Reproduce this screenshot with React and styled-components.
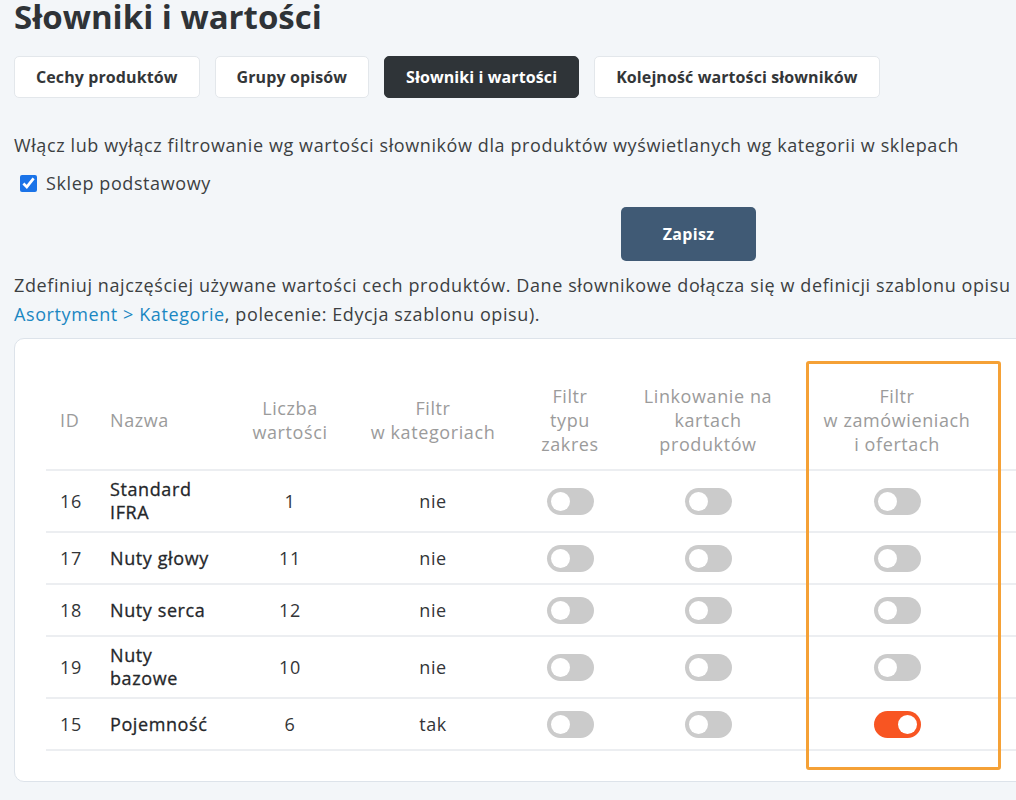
import React from "react";
import styled, { createGlobalStyle } from "styled-components";

const Global = createGlobalStyle`
  html, body {
    margin: 0;
    padding: 0;
    background: #f3f6f9;
    overflow: hidden;
  }
  body {
    font-family: "Open Sans", "Noto Sans", sans-serif;
    color: #3a3d40;
  }
`;

const Page = styled.div`
  width: 1363px;
  padding: 0 0 0 14px;
  box-sizing: border-box;
`;

const Title = styled.h1`
  margin: 0;
  font-size: 33px;
  line-height: 34px;
  font-weight: 700;
  color: #2f3337;
`;

const Tabs = styled.nav`
  display: flex;
  gap: 15px;
  margin-top: 22px;
`;

const Tab = styled.button`
  height: 42px;
  padding: 0 21px;
  border-radius: 5px;
  border: 1px solid ${(p) => (p.$active ? "#2f3438" : "#e3e7eb")};
  background: ${(p) => (p.$active ? "#2f3438" : "#ffffff")};
  color: ${(p) => (p.$active ? "#ffffff" : "#333638")};
  font-family: inherit;
  font-size: 16px;
  letter-spacing: 0.1px;
  font-weight: 700;
  cursor: pointer;
`;

const Text = styled.p`
  margin: ${(p) => p.$margin || "0"};
  font-size: 18px;
  letter-spacing: 0.6px;
  line-height: ${(p) => p.$lh || "28px"};
  color: #3c3f42;
  white-space: nowrap;
`;

const Link = styled.a`
  color: #1b87c2;
  text-decoration: none;
`;

const CheckRow = styled.label`
  display: flex;
  align-items: center;
  gap: 9px;
  margin: 10px 0 0 6px;
  font-size: 18px;
  letter-spacing: 0.6px;
  line-height: 28px;
  color: #3c3f42;
`;

const Check = styled.input`
  width: 17px;
  height: 17px;
  margin: 0;
  accent-color: #1a73e8;
`;

const Actions = styled.div`
  display: flex;
  justify-content: center;
  margin-top: 10px;
`;

const SaveButton = styled.button`
  width: 135px;
  height: 54px;
  border: none;
  border-radius: 5px;
  background: #405a75;
  color: #ffffff;
  font-family: inherit;
  font-size: 16px;
  letter-spacing: 0.3px;
  font-weight: 700;
`;

const Card = styled.section`
  margin-top: 9px;
  background: #ffffff;
  border: 1px solid #dde3ea;
  border-radius: 10px;
  padding: 32px 31px 30px;
`;

const TableWrap = styled.div`
  position: relative;
`;

const Highlight = styled.div`
  position: absolute;
  left: 760px;
  top: -10px;
  width: 195px;
  height: 409px;
  box-sizing: border-box;
  border: 3px solid #f5a136;
  border-radius: 3px;
  pointer-events: none;
`;

const Table = styled.table`
  width: 100%;
  table-layout: fixed;
  border-collapse: collapse;
`;

const Th = styled.th`
  padding: 13px 4px;
  padding-left: ${(p) => p.$pl || "4px"};
  font-size: 18px;
  letter-spacing: 0.6px;
  line-height: 24px;
  font-weight: 400;
  color: #9b9b9b;
  text-align: ${(p) => p.$align || "center"};
  vertical-align: middle;
  white-space: pre-line;
  border-bottom: 2px solid #eceef1;
`;

const Td = styled.td`
  height: 36px;
  padding: 7px 4px;
  padding-left: ${(p) => p.$pl || "4px"};
  font-size: 18px;
  letter-spacing: 0.6px;
  line-height: 23px;
  color: ${(p) => (p.$strong ? "#25272a" : "#333538")};
  -webkit-text-stroke: ${(p) => (p.$strong ? "0.3px #25272a" : "0")};
  text-align: ${(p) => p.$align || "center"};
  font-weight: 400;
  white-space: pre-line;
  vertical-align: middle;
  border-bottom: 2px solid #eceef1;
`;

const SwitchBox = styled.div`
  display: flex;
  align-items: center;
  justify-content: center;
  height: 36px;
`;

const Track = styled.span`
  position: relative;
  display: block;
  width: 47px;
  height: 27px;
  border-radius: 14px;
  background: ${(p) => (p.$on ? "#f85522" : "#cbcbcb")};
`;

const Knob = styled.span`
  position: absolute;
  top: 4px;
  left: ${(p) => (p.$on ? "24px" : "4px")};
  width: 19px;
  height: 19px;
  border-radius: 50%;
  background: #ffffff;
`;

const Toggle = ({ on }) => (
  <SwitchBox>
    <Track $on={on}>
      <Knob $on={on} />
    </Track>
  </SwitchBox>
);

const rows = [
  { id: 16, name: "Standard\nIFRA", count: 1, cat: "nie", zamow: false },
  { id: 17, name: "Nuty głowy", count: 11, cat: "nie", zamow: false },
  { id: 18, name: "Nuty serca", count: 12, cat: "nie", zamow: false },
  { id: 19, name: "Nuty\nbazowe", count: 10, cat: "nie", zamow: false },
  { id: 15, name: "Pojemność", count: 6, cat: "tak", zamow: true },
];

const tabs = [
  "Cechy produktów",
  "Grupy opisów",
  "Słowniki i wartości",
  "Kolejność wartości słowników",
];

export default function App() {
  return (
    <>
      <Global />
      <Page>
        <Title>Słowniki i wartości</Title>
        <Tabs>
          {tabs.map((t) => (
            <Tab key={t} $active={t === "Słowniki i wartości"}>
              {t}
            </Tab>
          ))}
        </Tabs>

        <Text $margin="33px 0 0">
          Włącz lub wyłącz filtrowanie wg wartości słowników dla produktów
          wyświetlanych wg kategorii w sklepach
        </Text>
        <CheckRow>
          <Check type="checkbox" defaultChecked />
          Sklep podstawowy
        </CheckRow>

        <Actions>
          <SaveButton>Zapisz</SaveButton>
        </Actions>

        <Text $margin="10px 0 0" $lh="29px">
          Zdefiniuj najczęściej używane wartości cech produktów. Dane
          słownikowe dołącza się w definicji szablonu opisu
          <br />
          <Link href="#">Asortyment &gt; Kategorie</Link>, polecenie: Edycja
          szablonu opisu).
        </Text>

        <Card>
          <TableWrap>
            <Highlight />
            <Table>
              <colgroup>
                <col style={{ width: 64 }} />
                <col style={{ width: 130 }} />
                <col style={{ width: 100 }} />
                <col style={{ width: 186 }} />
                <col style={{ width: 88 }} />
                <col style={{ width: 188 }} />
                <col style={{ width: 190 }} />
                <col />
              </colgroup>
              <thead>
                <tr>
                  <Th $align="left" $pl="14px">ID</Th>
                  <Th $align="left" $pl="0">Nazwa</Th>
                  <Th>{"Liczba\nwartości"}</Th>
                  <Th>{"Filtr\nw kategoriach"}</Th>
                  <Th>{"Filtr\ntypu\nzakres"}</Th>
                  <Th>{"Linkowanie na\nkartach\nproduktów"}</Th>
                  <Th>{"Filtr\nw zamówieniach\ni ofertach"}</Th>
                  <Th />
                </tr>
              </thead>
              <tbody>
                {rows.map((r) => (
                  <tr key={r.id}>
                    <Td $align="left" $pl="14px">{r.id}</Td>
                    <Td $align="left" $pl="0" $strong>{r.name}</Td>
                    <Td>{r.count}</Td>
                    <Td>{r.cat}</Td>
                    <Td><Toggle on={false} /></Td>
                    <Td><Toggle on={false} /></Td>
                    <Td><Toggle on={r.zamow} /></Td>
                    <Td />
                  </tr>
                ))}
              </tbody>
            </Table>
          </TableWrap>
        </Card>
      </Page>
    </>
  );
}
